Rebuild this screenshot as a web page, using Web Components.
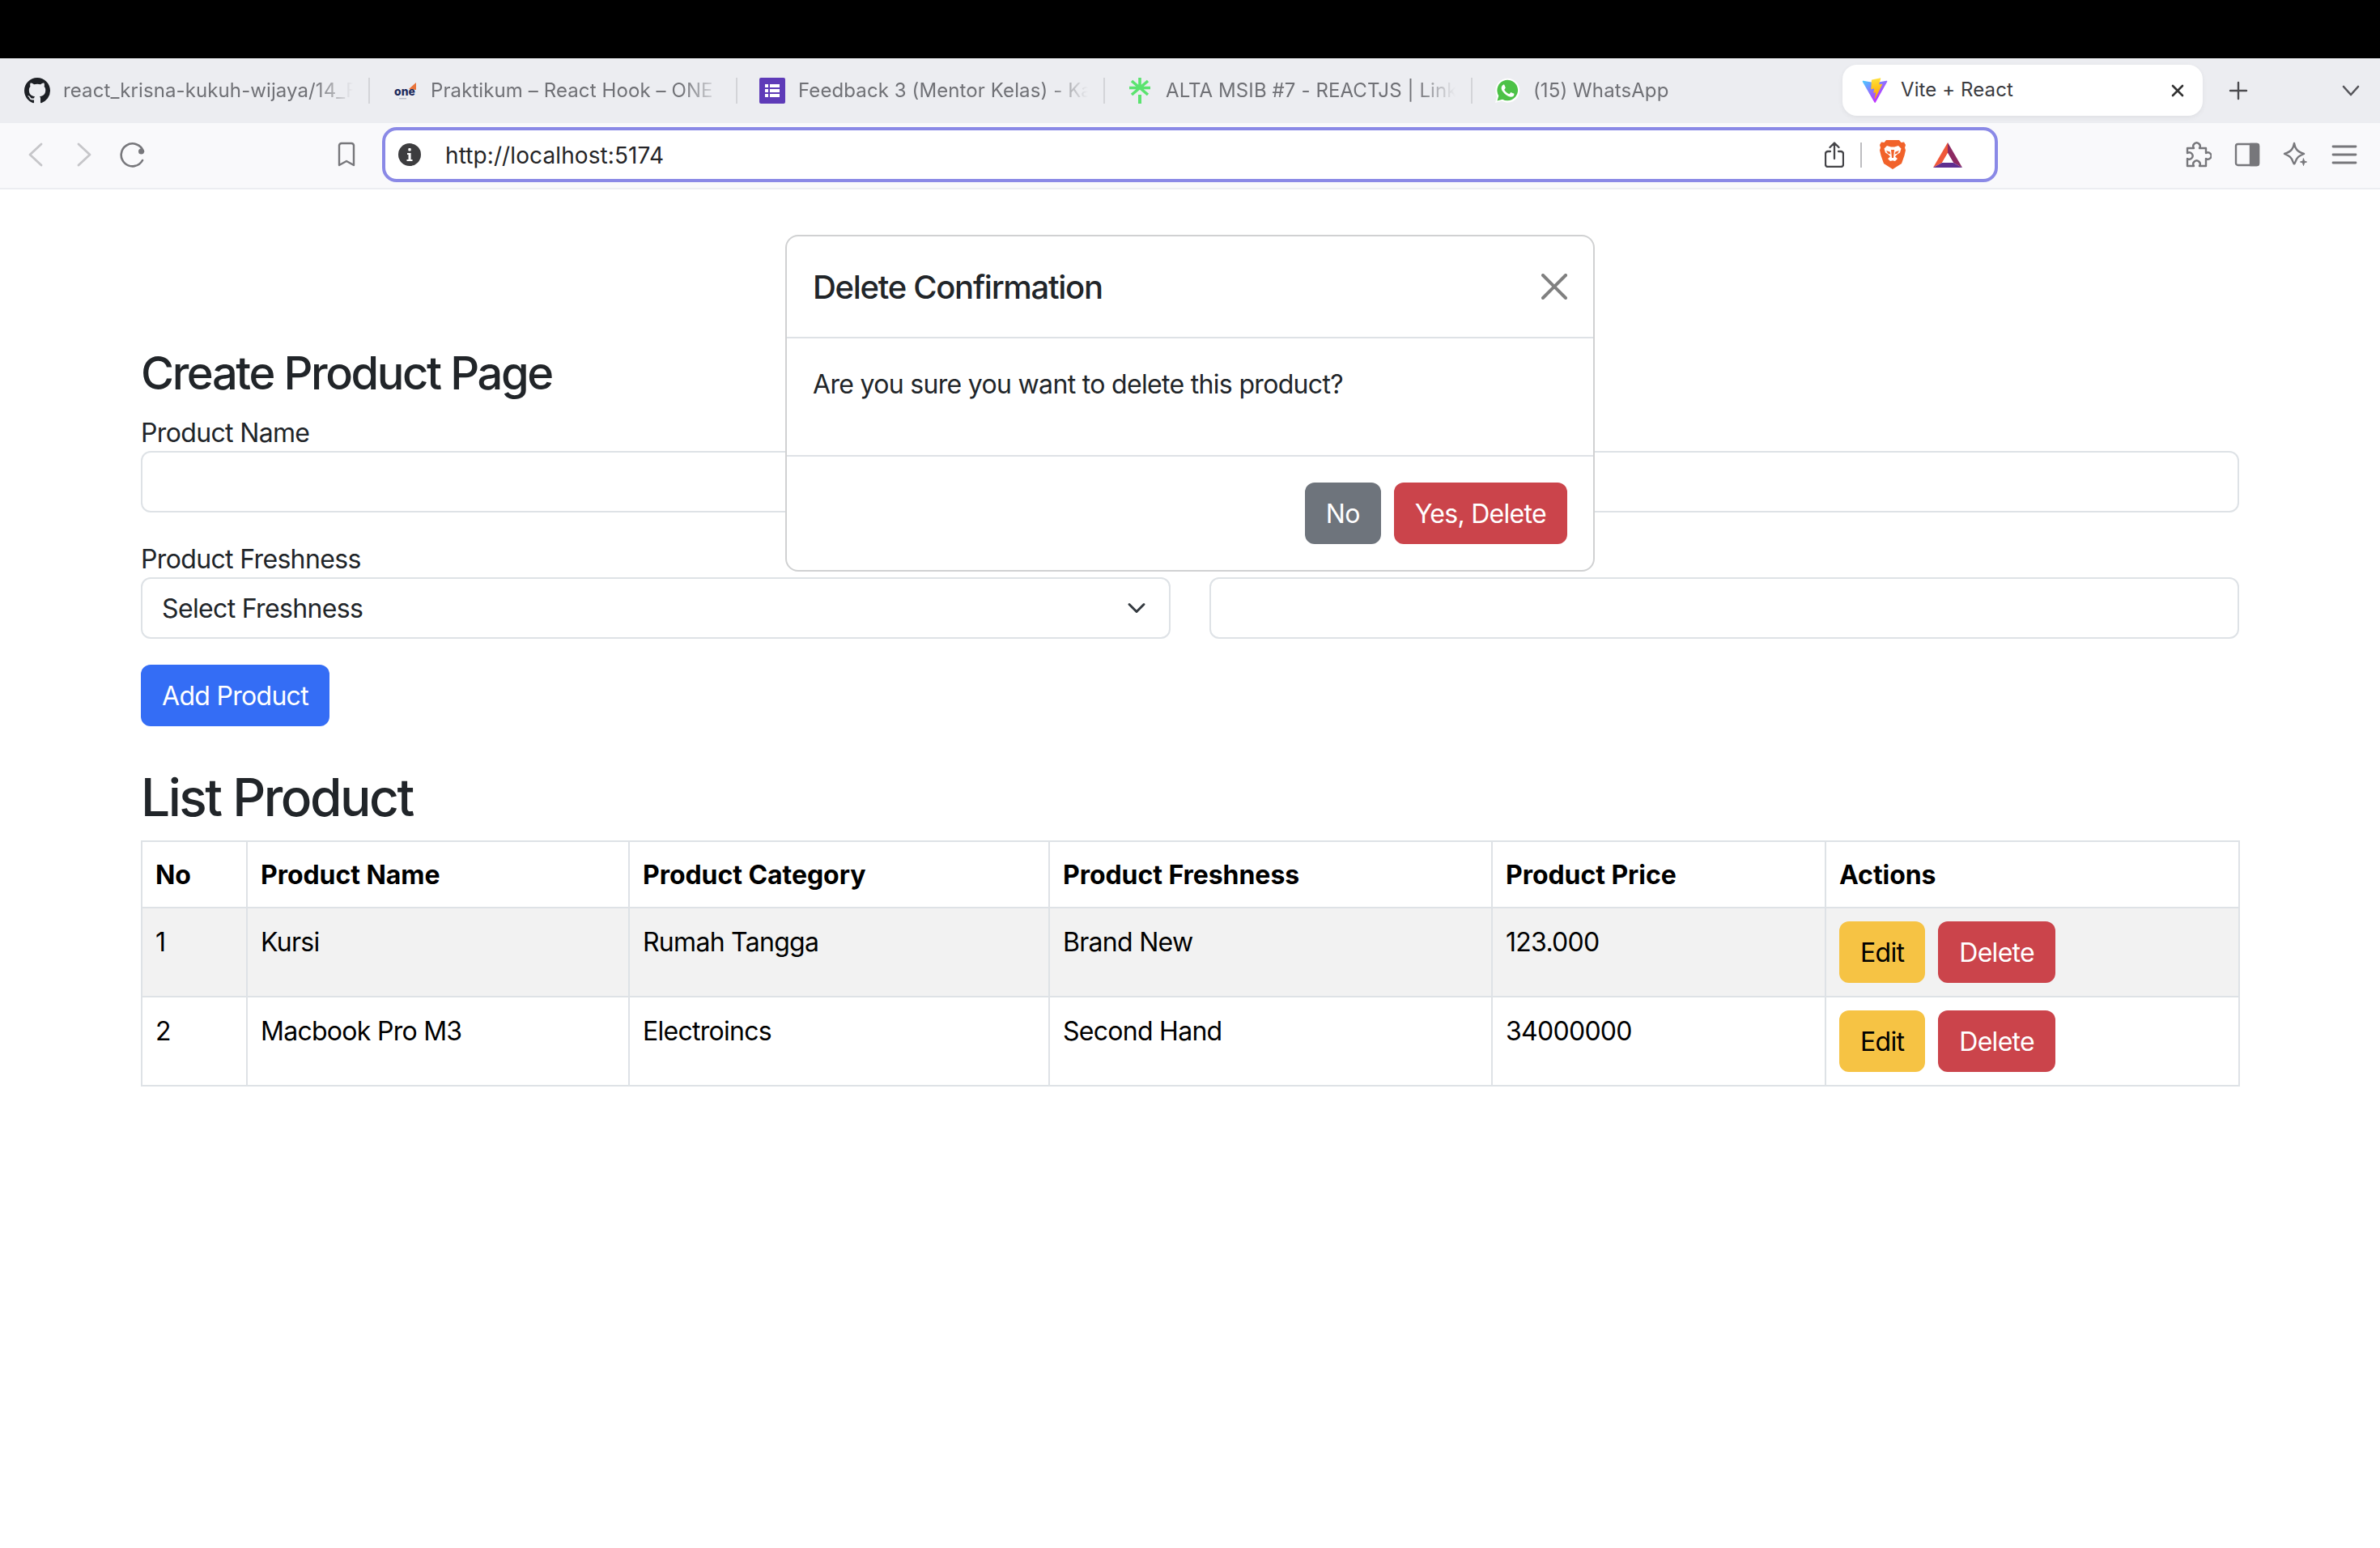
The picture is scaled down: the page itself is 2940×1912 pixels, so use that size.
<!DOCTYPE html>
<html lang="en">
<head>
<meta charset="utf-8">
<title>Vite + React</title>
<style>
    html, body { margin: 0; padding: 0; background: #fff; }
    body { font-family: Inter, "Noto Sans", "Liberation Sans", sans-serif; width: 2940px; height: 1912px; overflow: hidden; }
</style>
</head>
<body>
<browser-window>
    <browser-tab slot="tabs">
        <svg slot="icon" viewBox="0 0 16 16" width="32" height="32"><path fill="#1d2025" d="M8 0C3.58 0 0 3.58 0 8c0 3.54 2.29 6.53 5.47 7.59.4.07.55-.17.55-.38 0-.19-.01-.82-.01-1.49-2.01.37-2.53-.49-2.69-.94-.09-.23-.48-.94-.82-1.13-.28-.15-.68-.52-.01-.53.63-.01 1.08.58 1.23.82.72 1.21 1.87.87 2.33.66.07-.52.28-.87.51-1.07-1.78-.2-3.64-.89-3.64-3.95 0-.87.31-1.59.82-2.15-.08-.2-.36-1.02.08-2.12 0 0 .67-.21 2.2.82.64-.18 1.32-.27 2-.27.68 0 1.36.09 2 .27 1.53-1.04 2.2-.82 2.2-.82.44 1.1.16 1.92.08 2.12.51.56.82 1.27.82 2.15 0 3.07-1.87 3.75-3.65 3.95.29.25.54.73.54 1.48 0 1.07-.01 1.93-.01 2.2 0 .21.15.46.55.38A8.013 8.013 0 0016 8c0-4.42-3.58-8-8-8z"/></svg>
        react_krisna-kukuh-wijaya/14_F
    </browser-tab>
    <browser-tab slot="tabs">
        <svg slot="icon" viewBox="0 0 32 32" width="32" height="32">
            <polygon fill="#e8743b" points="21,14 30,6 30,15"/>
            <text x="3" y="22" font-family="Inter, sans-serif" font-size="14" font-weight="800" fill="#1c2a5c" textLength="26" lengthAdjust="spacingAndGlyphs">one</text>
            <rect x="9" y="25" width="9" height="1.4" fill="#b8bcc8"/>
        </svg>
        Praktikum – React Hook – ONE
    </browser-tab>
    <browser-tab slot="tabs">
        <svg slot="icon" viewBox="0 0 32 32" width="32" height="32">
            <rect width="32" height="32" rx="2" fill="#5e3bb8"/>
            <g fill="#fff"><rect x="7" y="8" width="4" height="4"/><rect x="13" y="8" width="12" height="4"/><rect x="7" y="14" width="4" height="4"/><rect x="13" y="14" width="12" height="4"/><rect x="7" y="20" width="4" height="4"/><rect x="13" y="20" width="12" height="4"/></g>
        </svg>
        Feedback 3 (Mentor Kelas) - Ka
    </browser-tab>
    <browser-tab slot="tabs">
        <svg slot="icon" viewBox="0 0 32 32" width="32" height="32">
            <g stroke="#5be36f" stroke-width="3.600" fill="none"><path d="M16 0v13M6 4l20 17M26 4L6 21M3 12.500h26"/><path d="M16 21v11" stroke-width="4"/></g>
        </svg>
        ALTA MSIB #7 - REACTJS | Link
    </browser-tab>
    <browser-tab slot="tabs">
        <svg slot="icon" viewBox="0 0 32 32" width="32" height="32">
            <path fill="#fff" d="M1 31l2.200-8A15 15 0 1 1 9 28.800z"/>
            <path fill="#4dc247" d="M3.500 28.500l1.800-6.300A12.800 12.800 0 1 1 10 26.700z"/>
            <path fill="#fff" d="M11.500 8.600c-.5 0-1.300.2-1.900 1-.7.800-1.600 2-1.600 3.900 0 2 1.500 4 1.700 4.200.2.300 2.900 4.600 7.200 6.200 3.500 1.400 4.300 1.100 5 1 .8-.1 2.400-1 2.800-2 .3-.9.300-1.800.2-2-.1-.2-.4-.3-.9-.5-.5-.3-2.400-1.200-2.800-1.300-.4-.1-.6-.2-.9.2-.3.500-1 1.300-1.300 1.600-.2.300-.5.300-.9.100-.5-.3-1.900-.7-3.600-2.200-1.300-1.200-2.200-2.700-2.500-3.100-.2-.5 0-.7.200-.9.200-.2.500-.5.700-.8.200-.3.300-.5.500-.800.100-.3.100-.6 0-.8-.1-.2-1.100-2.600-1.500-3.500-.3-.5-.8-.5-1.100-.5z" transform="translate(1.200 .4) scale(.93)"/>
        </svg>
        (15) WhatsApp
    </browser-tab>
    <browser-tab slot="tabs" active>
        <svg slot="icon" viewBox="0 0 410 404" width="32" height="32">
            <defs>
                <linearGradient id="viteA" x1="6" y1="33" x2="235" y2="344" gradientUnits="userSpaceOnUse"><stop stop-color="#41d1ff"/><stop offset="1" stop-color="#bd34fe"/></linearGradient>
                <linearGradient id="viteB" x1="194" y1="8" x2="236" y2="292" gradientUnits="userSpaceOnUse"><stop stop-color="#ffea83"/><stop offset=".08" stop-color="#ffdd35"/><stop offset="1" stop-color="#ffa800"/></linearGradient>
            </defs>
            <path fill="url(#viteA)" d="M399.641 59.5246L215.643 388.545C211.844 395.338 202.084 395.378 198.228 388.618L10.5817 59.5563C6.38087 52.1896 12.6802 43.2665 21.0281 44.7586L205.223 77.6824C206.398 77.8924 207.601 77.8904 208.776 77.6763L389.119 44.8058C397.439 43.2894 403.768 52.1434 399.641 59.5246Z"/>
            <path fill="url(#viteB)" d="M292.965 1.5744L156.801 28.2552C154.563 28.6937 152.906 30.5903 152.771 32.8664L144.395 174.33C144.198 177.662 147.258 180.248 150.51 179.498L188.42 170.749C191.967 169.931 195.172 173.055 194.443 176.622L183.18 231.775C182.422 235.487 185.907 238.661 189.532 237.56L212.947 230.446C216.577 229.344 220.065 232.527 219.297 236.242L201.398 322.875C200.278 328.294 207.486 331.249 210.492 326.603L212.5 323.5L323.454 102.072C325.312 98.3645 322.108 94.137 318.036 94.9228L279.014 102.454C275.347 103.161 272.227 99.746 273.262 96.1583L298.731 7.86689C299.767 4.27314 296.636 0.855181 292.965 1.5744Z"/>
        </svg>
        Vite + React
    </browser-tab>
    <product-page></product-page>
</browser-window>

<script>
const tmplBrowserTab = document.createElement('template');
tmplBrowserTab.innerHTML = `
    <style>
        :host {
            display: flex;
            align-items: center;
            box-sizing: border-box;
            width: 454px;
            height: 32px;
            padding-left: 27px;
            gap: 16px;
            font-size: 24px;
            letter-spacing: .1px;
            color: #707176;
            border-right: 2px solid #d3d4d8;
        }
        :host([active]) {
            width: 445px;
            height: 63px;
            padding-left: 24px;
            margin: 8px 0 0 3px;
            align-self: flex-start;
            background: #fff;
            border: none;
            border-radius: 18px;
            box-shadow: 0 2px 6px rgba(0,0,0,.06);
            color: #3a3b3f;
        }
        :host(:nth-child(5)) { border-right: none; }
        .icon { display: flex; width: 32px; height: 32px; flex: none; }
        .title {
            flex: 1;
            white-space: nowrap;
            overflow: hidden;
            -webkit-mask-image: linear-gradient(to right, #000 calc(100% - 48px), transparent);
            mask-image: linear-gradient(to right, #000 calc(100% - 48px), transparent);
            margin-right: 19px;
            padding-bottom: 2px;
        }
        :host([active]) .title { -webkit-mask-image: none; mask-image: none; }
        .close { display: none; flex: none; margin-right: 23px; }
        :host([active]) .close { display: block; }
    </style>
    <span class="icon"><slot name="icon"></slot></span>
    <span class="title"><slot></slot></span>
    <svg class="close" width="16" height="16" viewBox="0 0 16 16"><path d="M2 2l12 12M14 2L2 14" stroke="#333" stroke-width="2.600" stroke-linecap="round"/></svg>
`;

class BrowserTab extends HTMLElement {
    constructor() {
        super()
        this.attachShadow({ mode: 'open' })
        this.shadowRoot.appendChild(tmplBrowserTab.content.cloneNode(true))
    }
}
window.customElements.define('browser-tab', BrowserTab);

const tmplBrowserWindow = document.createElement('template');
tmplBrowserWindow.innerHTML = `
    <style>
        :host { display: flex; flex-direction: column; height: 1912px; }
        .notch { height: 72px; background: #000; flex: none; }
        .tabstrip {
            display: flex;
            align-items: center;
            height: 80px;
            padding-left: 3px;
            background: #ecedf1;
            flex: none;
        }
        .strip-actions { display: flex; align-items: center; flex: 1; height: 100%; padding: 0 24px 0 32px; justify-content: space-between; }
        .toolbar {
            display: flex;
            align-items: center;
            gap: 28px;
            box-sizing: border-box;
            height: 82px;
            padding: 0 28px 2px;
            background: #f9f9fb;
            border-bottom: 2px solid #ecedf1;
            flex: none;
        }
        .tool { display: block; width: 32px; height: 32px; flex: none; fill: none; stroke: #77777b; stroke-width: 2.400; stroke-linecap: round; stroke-linejoin: round; }
        .tool.off { stroke: #c6c6c9; }
        .bookmark { margin-left: 204px; }
        .urlbar {
            display: flex;
            align-items: center;
            box-sizing: border-box;
            width: 1996px;
            height: 68px;
            padding: 0 40px 0 16px;
            background: #fff;
            border: 4px solid #8a89e6;
            border-radius: 18px;
            flex: none;
        }
        .url { flex: 1; margin-left: 30px; padding-top: 2px; font-size: 28px; letter-spacing: .1px; color: #252527; }
        .divider { width: 2px; height: 31px; background: #bdbdc0; margin: 0 22px 0 20px; }
        .right-tools { display: flex; gap: 28px; margin-left: auto; }
        main { flex: 1; position: relative; }
    </style>
    <div class="notch"></div>
    <div class="tabstrip">
        <slot name="tabs"></slot>
        <div class="strip-actions">
            <svg width="24" height="24" viewBox="0 0 24 24"><path d="M12 2v20M2 12h20" stroke="#4c4c50" stroke-width="2.400" stroke-linecap="round"/></svg>
            <svg width="24" height="14" viewBox="0 0 24 14"><path d="M3 2l9 10 9-10" fill="none" stroke="#55555a" stroke-width="2.600" stroke-linecap="round" stroke-linejoin="round"/></svg>
        </div>
    </div>
    <div class="toolbar">
        <svg class="tool off" viewBox="0 0 32 32"><path d="M23 3L9 16l14 13" stroke-width="2.800"/></svg>
        <svg class="tool off" viewBox="0 0 32 32"><path d="M9 3l14 13L9 29" stroke-width="2.800"/></svg>
        <svg class="tool" viewBox="0 0 32 32"><path d="M29 12A14 14 0 1 0 28 23" stroke-width="2.600"/><circle cx="26.500" cy="12" r="3.500" fill="#77777b" stroke="none"/></svg>
        <svg class="tool bookmark" viewBox="0 0 32 32"><path d="M7 4.500A3 3 0 0 1 10 2h12a3 3 0 0 1 3 2.500v24.500l-9-5-9 5z"/></svg>
        <div class="urlbar">
            <svg width="28" height="28" viewBox="0 0 28 28"><circle cx="14" cy="14" r="14" fill="#3d3d3f"/><rect x="12.300" y="6" width="3.400" height="3.400" rx="1" fill="#fff"/><path d="M11 12h4.600v8H17.500v2h-7v-2h2v-6H11z" fill="#fff"/></svg>
            <span class="url">http://localhost:5174</span>
            <svg width="24" height="32" viewBox="0 0 24 32"><path d="M7 12H4a3 3 0 0 0-3 3v13a3 3 0 0 0 3 3h16a3 3 0 0 0 3-3V15a3 3 0 0 0-3-3h-3M12 21V2M6.500 7L12 1.500 17.500 7" fill="none" stroke="#444448" stroke-width="2.300" stroke-linecap="round" stroke-linejoin="round"/></svg>
            <span class="divider"></span>
            <svg width="32" height="36" viewBox="0 0 32 36">
                <path fill="#f1622a" d="M8 0h16l2.500 3 3.500-.5 2 3.500-1 3.500 1 3-1.500 6.500L27 29l-11 7-11-7-3.500-10L0 12.500l1-3L0 6l2-3.500 3.500.5z"/>
                <path fill="#fff" d="M9 7l5 1.500h4L23 7l3.500 3.500-1.500 5-4 2.500-2 2.500 3 2.500-3 3-3-.7-3 .7-3-3 3-2.500-2-2.500-4-2.500-1.500-5z"/>
                <path fill="#f1622a" d="M8 13l4.500 1.500 1 3-3.500-1zM24 13l-4.500 1.500-1 3 3.500-1zM14 12h4l-1 10h-2zM12 27h8l-4 3.500z"/>
            </svg>
            <svg width="36" height="31" viewBox="0 0 36 31" style="margin-left:34px">
                <polygon fill="#f0583a" points="18,0 0,31 11,25 18,13"/>
                <polygon fill="#8c2a62" points="18,0 36,31 25,25 18,13"/>
                <polygon fill="#5f2f90" points="0,31 36,31 25,25 11,25"/>
                <polygon fill="#fff" points="18,13 11,25 25,25"/>
            </svg>
        </div>
        <div class="right-tools">
            <svg class="tool" viewBox="0 0 32 32"><path d="M2 8H10a4.200 4.200 0 1 1 7 0H25V14a4.200 4.200 0 1 1 0 7V30H17a4.200 4.200 0 1 0-7 0H2V21a4.200 4.200 0 1 0 0-7z"/></svg>
            <svg class="tool" viewBox="0 0 32 32"><rect x="2" y="3" width="28" height="26" rx="2.500"/><path d="M20 3h8a2 2 0 0 1 2 2v22a2 2 0 0 1-2 2h-8z" fill="#77777b"/></svg>
            <svg class="tool" viewBox="0 0 32 32"><path d="M14 2c1 6 3 10 12 13-6 2.500-9 4-11 11-.6 2-1.400 2-2 0C11 19 8 17.500 2 15c9-3 11-7 12-13z"/><path d="M25.500 21l1 3 3 1-3 1-1 3.500-1-3.500-3-1 3-1z" fill="#77777b" stroke-width="1"/></svg>
            <svg class="tool" viewBox="0 0 32 32"><path d="M2 6h28M2 16h28M2 26h28" stroke-width="2.800"/></svg>
        </div>
    </div>
    <main><slot></slot></main>
`;

class BrowserWindow extends HTMLElement {
    constructor() {
        super()
        this.attachShadow({ mode: 'open' })
        this.shadowRoot.appendChild(tmplBrowserWindow.content.cloneNode(true))
    }
}
window.customElements.define('browser-window', BrowserWindow);

const tmplBsButton = document.createElement('template');
tmplBsButton.innerHTML = `
    <style>
        :host {
            display: inline-flex;
            align-items: center;
            justify-content: center;
            box-sizing: border-box;
            height: 76px;
            padding: 2px 26px 0;
            border-radius: 12px;
            font-size: 32px;
            line-height: 48px;
            letter-spacing: -.7px;
            color: #fff;
            white-space: nowrap;
        }
        :host([variant="primary"]) { background: #346df5; }
        :host([variant="secondary"]) { background: #6e747c; }
        :host([variant="danger"]) { background: #cb444b; }
        :host([variant="warning"]) { background: #f6c344; color: #000; }
    </style>
    <slot></slot>
`;

class BsButton extends HTMLElement {
    constructor() {
        super()
        this.attachShadow({ mode: 'open' })
        this.shadowRoot.appendChild(tmplBsButton.content.cloneNode(true))
    }
}
window.customElements.define('bs-button', BsButton);

const tmplFormField = document.createElement('template');
tmplFormField.innerHTML = `
    <style>
        :host { display: block; color: #212529; font-size: 32px; line-height: 48px; letter-spacing: -.65px; }
        .label { height: 46px; padding-top: 2px; }
        .control {
            display: flex;
            align-items: center;
            justify-content: space-between;
            box-sizing: border-box;
            height: 76px;
            padding: 0 28px 0 24px;
            border: 2px solid #dee2e6;
            border-radius: 12px;
            background: #fff;
        }
        .text { padding-top: 2px; }
        svg { display: none; }
        :host([select]) svg { display: block; }
    </style>
    <div class="label"><slot name="label"></slot></div>
    <div class="control">
        <span class="text"><slot></slot></span>
        <svg width="24" height="24" viewBox="0 0 16 16"><path d="m2 5 6 6 6-6" fill="none" stroke="#343a40" stroke-width="2" stroke-linecap="round" stroke-linejoin="round"/></svg>
    </div>
`;

class FormField extends HTMLElement {
    constructor() {
        super()
        this.attachShadow({ mode: 'open' })
        this.shadowRoot.appendChild(tmplFormField.content.cloneNode(true))
    }
}
window.customElements.define('form-field', FormField);

const tmplProductTable = document.createElement('template');
tmplProductTable.innerHTML = `
    <style>
        :host { display: block; }
        table { width: 2591px; table-layout: fixed; border-collapse: collapse; color: #000; font-size: 32px; line-height: 48px; letter-spacing: -.72px; }
        th, td { border: 2px solid #dee2e6; padding: 18px 16px 14px; text-align: left; vertical-align: top; }
        th { font-weight: 700; letter-spacing: -.05px; padding: 17px 16px 15px; }
        tbody tr:nth-child(odd) td { background: #f2f2f2; }
        td.cell-actions { padding: 16px; }
        .actions { display: flex; gap: 16px; }
    </style>
    <table>
        <colgroup>
            <col style="width:130px"><col style="width:472px"><col style="width:519px">
            <col style="width:547px"><col style="width:412px"><col style="width:511px">
        </colgroup>
        <thead>
            <tr><th>No</th><th>Product Name</th><th>Product Category</th><th>Product Freshness</th><th>Product Price</th><th>Actions</th></tr>
        </thead>
        <tbody id="rows"></tbody>
    </table>
`;

const products = [
    { no: 1, name: 'Kursi', category: 'Rumah Tangga', freshness: 'Brand New', price: '123.000' },
    { no: 2, name: 'Macbook Pro M3', category: 'Electroincs', freshness: 'Second Hand', price: '34000000' },
];

class ProductTable extends HTMLElement {
    constructor() {
        super()
        this.attachShadow({ mode: 'open' })
        this.shadowRoot.appendChild(tmplProductTable.content.cloneNode(true))
        this.$('rows').innerHTML = products.map(p => `
            <tr>
                <td>${p.no}</td><td>${p.name}</td><td>${p.category}</td><td>${p.freshness}</td><td>${p.price}</td>
                <td class="cell-actions"><div class="actions"><bs-button variant="warning">Edit</bs-button><bs-button variant="danger">Delete</bs-button></div></td>
            </tr>`).join('')
    }

    $(id) { return this.shadowRoot.getElementById(id) }
}
window.customElements.define('product-table', ProductTable);

const tmplDeleteModal = document.createElement('template');
tmplDeleteModal.innerHTML = `
    <style>
        :host {
            display: block;
            position: absolute;
            top: 56px;
            left: calc(50% - 500px);
            width: 1000px;
            box-sizing: border-box;
            background: #fff;
            border: 2px solid #d0d1d2;
            border-radius: 16px;
            color: #212529;
            font-size: 32px;
            line-height: 48px;
        }
        header {
            display: flex;
            align-items: center;
            justify-content: space-between;
            height: 124px;
            padding: 0 32px;
            border-bottom: 2px solid #dee2e6;
        }
        h5 { margin: 0; padding-top: 2px; font-size: 40px; line-height: 60px; font-weight: 550; letter-spacing: -1.3px; }
        .body { height: 144px; box-sizing: border-box; padding: 33px 32px 31px; letter-spacing: -.68px; }
        footer {
            display: flex;
            justify-content: flex-end;
            gap: 16px;
            padding: 32px;
            border-top: 2px solid #dee2e6;
        }
    </style>
    <header>
        <h5>Delete Confirmation</h5>
        <svg width="32" height="32" viewBox="0 0 16 16"><path fill="#808080" d="M.293.293a1 1 0 0 1 1.414 0L8 6.586 14.293.293a1 1 0 1 1 1.414 1.414L9.414 8l6.293 6.293a1 1 0 0 1-1.414 1.414L8 9.414l-6.293 6.293a1 1 0 0 1-1.414-1.414L6.586 8 .293 1.707a1 1 0 0 1 0-1.414z"/></svg>
    </header>
    <div class="body">Are you sure you want to delete this product?</div>
    <footer>
        <bs-button variant="secondary">No</bs-button>
        <bs-button variant="danger">Yes, Delete</bs-button>
    </footer>
`;

class DeleteModal extends HTMLElement {
    constructor() {
        super()
        this.attachShadow({ mode: 'open' })
        this.shadowRoot.appendChild(tmplDeleteModal.content.cloneNode(true))
    }
}
window.customElements.define('delete-modal', DeleteModal);

const tmplProductPage = document.createElement('template');
tmplProductPage.innerHTML = `
    <style>
        :host { display: block; padding: 192px 174px 0; color: #212529; }
        h1, h2 { margin: 0; padding-top: 2px; font-weight: 550; line-height: 1.2; }
        h1 { font-size: 56px; margin-bottom: 14px; letter-spacing: -2.4px; }
        h2 { font-size: 64px; margin: 48px 0 14px; letter-spacing: -2.5px; }
        .grid { display: grid; grid-template-columns: 1272px 1272px; column-gap: 48px; row-gap: 32px; margin-bottom: 32px; }
    </style>
    <h1>Create Product Page</h1>
    <div class="grid">
        <form-field><span slot="label">Product Name</span></form-field>
        <form-field></form-field>
        <form-field select><span slot="label">Product Freshness</span>Select Freshness</form-field>
        <form-field></form-field>
    </div>
    <bs-button variant="primary">Add Product</bs-button>
    <h2>List Product</h2>
    <product-table></product-table>
    <delete-modal></delete-modal>
`;

class ProductPage extends HTMLElement {
    constructor() {
        super()
        this.attachShadow({ mode: 'open' })
        this.shadowRoot.appendChild(tmplProductPage.content.cloneNode(true))
    }
}
window.customElements.define('product-page', ProductPage);
</script>
</body>
</html>
